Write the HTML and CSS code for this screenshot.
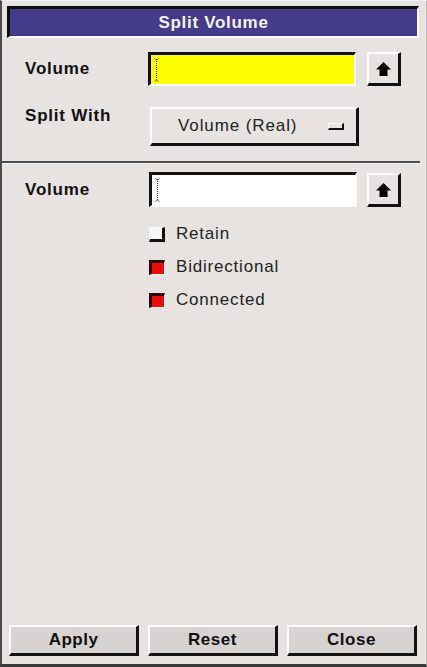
FILE: index.html
```html
<!DOCTYPE html>
<html>
<head>
<meta charset="utf-8">
<link rel="stylesheet" href="styles.css">
</head>
<body>
<div class="window">
  <div class="titlebar">Split Volume</div>

  <div class="row row-first">
    <div class="label">Volume</div>
    <div class="field field-yellow"><span class="cursor"><svg width="5" height="24" viewBox="0 0 5 24"><line x1="2.5" y1="1" x2="2.5" y2="23" stroke="#444" stroke-width="1" stroke-dasharray="1 1"/><path d="M0.5 0.5 L2.5 2 L4.5 0.5 M0.5 23.5 L2.5 22 L4.5 23.5" stroke="#555" fill="none" stroke-width="1"/></svg></span></div>
    <div class="arrowbtn"><svg width="15" height="14" viewBox="0 0 15 14"><polygon points="7.5,0 15,7.5 11.5,7.5 11.5,14 3.5,14 3.5,7.5 0,7.5" fill="#000"/></svg></div>
  </div>

  <div class="row row-split">
    <div class="label label-top">Split With</div>
    <div class="option">
      <span class="option-text">Volume (Real)</span>
      <span class="option-ind"></span>
    </div>
  </div>

  <div class="separator"></div>

  <div class="row row-third">
    <div class="label">Volume</div>
    <div class="field field-white"><span class="cursor"><svg width="5" height="24" viewBox="0 0 5 24"><line x1="2.5" y1="1" x2="2.5" y2="23" stroke="#444" stroke-width="1" stroke-dasharray="1 1"/><path d="M0.5 0.5 L2.5 2 L4.5 0.5 M0.5 23.5 L2.5 22 L4.5 23.5" stroke="#555" fill="none" stroke-width="1"/></svg></span></div>
    <div class="arrowbtn"><svg width="15" height="14" viewBox="0 0 15 14"><polygon points="7.5,0 15,7.5 11.5,7.5 11.5,14 3.5,14 3.5,7.5 0,7.5" fill="#000"/></svg></div>
  </div>

  <div class="checks">
    <div class="check"><span class="box box-off"></span><span class="check-text">Retain</span></div>
    <div class="check"><span class="box box-on"></span><span class="check-text">Bidirectional</span></div>
    <div class="check"><span class="box box-on"></span><span class="check-text">Connected</span></div>
  </div>

  <div class="buttons">
    <div class="btn">Apply</div>
    <div class="btn">Reset</div>
    <div class="btn">Close</div>
  </div>
</div>
</body>
</html>
```

FILE: styles.css
```css
* { box-sizing: border-box; }
html, body {
  margin: 0;
  padding: 0;
  background: #e6e3e1;
}
body {
  font-family: "Liberation Sans", Arial, sans-serif;
  color: #111;
}
.window {
  width: 427px;
  height: 667px;
  display: flex;
  flex-direction: column;
  border-top: 1px solid #f4f2f0;
  border-left: 2px solid #4a4a4a;
  border-right: 1px solid #bdbab8;
  border-bottom: 3px solid #3a3a3a;
  background: #e6e3e1;
}
.titlebar {
  margin: 5px 7px 0 5px;
  height: 32px;
  background: #443b8b;
  border-top: 3px solid #0d0d0d;
  border-left: 3px solid #0d0d0d;
  border-bottom: 2px solid #fafafa;
  border-right: 2px solid #fafafa;
  color: #f4f4f8;
  font-weight: bold;
  font-size: 17px;
  letter-spacing: 0.7px;
  display: flex;
  align-items: center;
  justify-content: center;
}
.row {
  display: flex;
  align-items: center;
  padding-left: 23px;
}
.row-first { margin-top: 14px; }
.row-split { margin-top: 21px; align-items: flex-start; }
.row-third { margin-top: 8px; }
.label {
  width: 123px;
  font-weight: bold;
  font-size: 17px;
  letter-spacing: 0.8px;
  color: #111;
}
.label-top { padding-top: 0px; line-height: 18px; }
.field {
  width: 208px;
  height: 34px;
  border-top: 3px solid #111;
  border-left: 3px solid #111;
  border-bottom: 2px solid #fbfbfb;
  border-right: 2px solid #fbfbfb;
  display: flex;
  align-items: center;
  padding-left: 3px;
}
.field-yellow { background: #ffff00; }
.field-white { background: #ffffff; margin-left: 1px; height: 35px; }
.cursor { display: flex; }
.arrowbtn {
  width: 34px;
  height: 34px;
  margin-left: 11px;
  border-top: 2px solid #fbfbfb;
  border-left: 2px solid #fbfbfb;
  border-bottom: 3px solid #111;
  border-right: 3px solid #111;
  display: flex;
  align-items: center;
  justify-content: center;
  padding-top: 1px;
}
.row-third .arrowbtn { margin-left: 10px; }
.option {
  margin-left: 2px;
  width: 209px;
  height: 39px;
  border-top: 2px solid #fbfbfb;
  border-left: 2px solid #fbfbfb;
  border-bottom: 3px solid #111;
  border-right: 3px solid #111;
  display: flex;
  align-items: center;
  padding-left: 26px;
}
.option-text {
  font-size: 17px;
  letter-spacing: 0.9px;
  color: #222;
}
.option-ind {
  margin-left: 31px;
  width: 16px;
  height: 7px;
  border-top: 1px solid #fbfbfb;
  border-left: 1px solid #fbfbfb;
  border-bottom: 2px solid #111;
  border-right: 2px solid #111;
  background: #e6e3e1;
}
.separator {
  margin-top: 15px;
  margin-right: 6px;
  height: 3px;
  border-top: 2px solid #4d4d4d;
  border-bottom: 1px solid #f6f6f6;
}
.checks {
  margin-top: 11px;
  padding-left: 147px;
  display: flex;
  flex-direction: column;
  gap: 1px;
}
.check {
  height: 32px;
  display: flex;
  align-items: center;
}
.box {
  width: 16px;
  height: 15px;
  display: block;
}
.box-off {
  background: #f6f6f6;
  border-top: 1px solid #f8f8f8;
  border-left: 1px solid #f8f8f8;
  border-bottom: 3px solid #111;
  border-right: 3px solid #111;
}
.box-on {
  background: #ee0a0a;
  border-top: 3px solid #2a0808;
  border-left: 3px solid #2a0808;
  border-bottom: 1px solid #f8f8f8;
  border-right: 1px solid #f8f8f8;
}
.check-text {
  margin-left: 11px;
  font-size: 17px;
  letter-spacing: 0.8px;
  color: #222;
}
.buttons {
  margin-top: auto;
  margin-left: 7px;
  margin-bottom: 8px;
  display: grid;
  grid-template-columns: 130px 130px 130px;
  column-gap: 9px;
}
.btn {
  height: 31px;
  background: #d6d3d1;
  border-top: 2px solid #fbfbfb;
  border-left: 2px solid #fbfbfb;
  border-bottom: 3px solid #111;
  border-right: 3px solid #111;
  display: flex;
  align-items: center;
  justify-content: center;
  font-weight: bold;
  font-size: 17px;
  letter-spacing: 0.5px;
  color: #111;
}
```
